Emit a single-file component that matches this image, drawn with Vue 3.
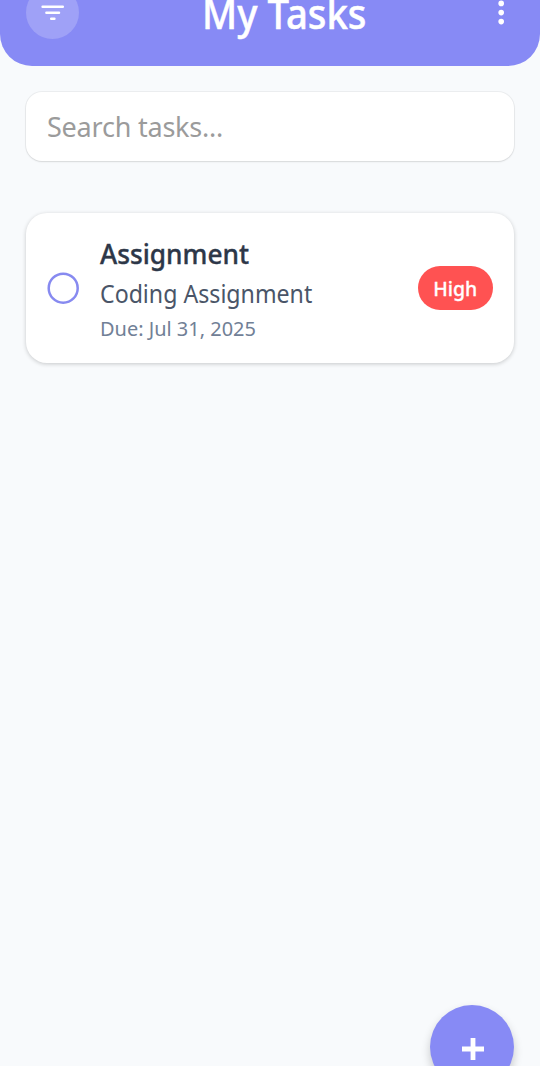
<template>
  <div class="screen">
    <header class="bar">
      <button class="filter" aria-label="Filter">
        <svg width="26" height="26" viewBox="0 0 26 26"><path d="M2.6 6.7h20.2M6.4 12.8h12.6M11.2 18.8h3.2" fill="none" stroke="#fff" stroke-width="2.5" stroke-linecap="round"/></svg>
      </button>
      <h1>My Tasks</h1>
      <svg class="dots" width="8" height="32" viewBox="0 0 8 32"><g fill="#fff"><circle cx="4.2" cy="6.4" r="2.8"/><circle cx="4.2" cy="15.6" r="2.8"/><circle cx="4.2" cy="24.6" r="2.8"/></g></svg>
    </header>
    <main>
      <input class="search" placeholder="Search tasks..." />
      <article class="card">
        <svg class="ring" width="32" height="32" viewBox="0 0 32 32"><circle cx="16.2" cy="16.2" r="14.5" fill="none" stroke="#878af0" stroke-width="2.5"/></svg>
        <div class="body">
          <h2>Assignment</h2>
          <p class="desc">Coding Assignment</p>
          <p class="due">Due: Jul 31, 2025</p>
        </div>
        <span class="badge"><span>High</span></span>
      </article>
    </main>
    <button class="fab" aria-label="Add"><svg width="24" height="24" viewBox="0 0 24 24"><path d="M12 1v22M1 12h22" stroke="#fff" stroke-width="4.8"/></svg></button>
  </div>
</template>
<script setup>
</script>
<style>
body { background: #f8fafc; }
</style>
<style scoped>
* { box-sizing: border-box; margin: 0; }
.screen { height: 1066px; overflow: hidden; position: relative; background: #f8fafc; font-family: "Noto Sans", sans-serif; }
.bar { height: 66px; background: #878af5; border-radius: 0 0 32px 32px; display: flex; align-items: flex-start; padding: 0 35px 0 26px; }
.filter { width: 53px; height: 53px; margin-top: -14px; border: 0; border-radius: 50%; background: #9fa1f7; display: grid; place-items: center; padding: 0; }
h1 { font-size: 41px; line-height: 27px; font-weight: 500; color: #fff; margin-left: 123px; -webkit-text-stroke: .5px #fff; white-space: nowrap; transform: scaleX(.935); transform-origin: left; }
.dots { margin: -3px 0 0 auto; }
main { padding: 26px 26px 0; }
.search { display: block; width: 100%; height: 69px; border: 0; border-radius: 16px; background: #fff; padding: 0 21px; font: 27px "Noto Sans", sans-serif; letter-spacing: -.22px; box-shadow: 0 0 0 1px #0000000c, 0 1px 2px #00000018; }
.search::placeholder { color: #9b9b9b; }
.card { margin-top: 52px; height: 150px; border-radius: 21px; background: #fff; box-shadow: 0 1px 4px #0003; display: flex; align-items: center; padding: 0 21px; }
.ring { margin-right: 21px; }
.body { flex: 1; padding-top: 2px; }
.body > * { transform-origin: left; white-space: nowrap; }
h2 { font-size: 27.5px; line-height: 36px; font-weight: 500; color: #2d3748; -webkit-text-stroke: .35px #2d3748; transform: scaleX(.955); }
.desc { font-size: 25px; line-height: 32px; color: #4a5568; margin-top: 5px; transform: scaleX(.926); }
.due { font-size: 20.5px; line-height: 28px; color: #718096; margin-top: 5px; transform: scaleX(.974); }
.badge { width: 75px; height: 44px; border-radius: 22px; background: #ff5252; color: #fff; font-size: 20.5px; font-weight: 500; -webkit-text-stroke: .3px #fff; display: grid; place-items: center; }
.badge span { transform: scaleX(.95); }
.fab { position: absolute; left: 430px; top: 1005px; width: 84px; height: 84px; border: 0; border-radius: 50%; background: #878af5; display: grid; place-items: center; padding: 4px 0 0 1px; box-shadow: 0 5px 10px #0003; }
</style>
